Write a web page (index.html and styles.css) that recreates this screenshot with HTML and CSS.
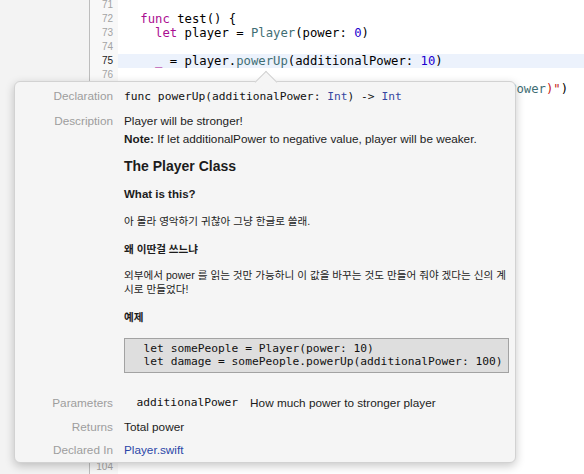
FILE: index.html
```html
<!DOCTYPE html>
<html>
<head>
<meta charset="utf-8">
<link rel="stylesheet" href="styles.css">
</head>
<body>
<div class="screen">
  <div class="sidebar"></div>
  <div class="editor">
    <div class="line"><div class="ln">71</div><div class="code"></div></div>
    <div class="line"><div class="ln">72</div><div class="code">  <span class="kw">func</span> test() {</div></div>
    <div class="line"><div class="ln">73</div><div class="code">    <span class="kw">let</span> player = <span class="ty">Player</span>(power: <span class="num">0</span>)</div></div>
    <div class="line"><div class="ln">74</div><div class="code"></div></div>
    <div class="line active"><div class="ln cur">75</div><div class="code">    <span class="kw">_</span> = player.<span class="ty">powerUp</span>(additionalPower: <span class="num">10</span>)</div></div>
    <div class="line"><div class="ln">76</div><div class="code"></div></div>
    <div class="line"><div class="ln"></div><div class="code">                                                    <span class="ty">Power</span><span class="str">)"</span>)</div></div>
    <div class="line"><div class="ln"></div><div class="code"></div></div>
    <div class="line"><div class="ln"></div><div class="code"></div></div>
    <div class="line"><div class="ln"></div><div class="code"></div></div>
    <div class="line"><div class="ln"></div><div class="code"></div></div>
    <div class="line"><div class="ln"></div><div class="code"></div></div>
    <div class="line"><div class="ln"></div><div class="code"></div></div>
    <div class="line"><div class="ln"></div><div class="code"></div></div>
    <div class="line"><div class="ln"></div><div class="code"></div></div>
    <div class="line"><div class="ln"></div><div class="code"></div></div>
    <div class="line"><div class="ln"></div><div class="code"></div></div>
    <div class="line"><div class="ln"></div><div class="code"></div></div>
    <div class="line"><div class="ln"></div><div class="code"></div></div>
    <div class="line"><div class="ln"></div><div class="code"></div></div>
    <div class="line"><div class="ln"></div><div class="code"></div></div>
    <div class="line"><div class="ln"></div><div class="code"></div></div>
    <div class="line"><div class="ln"></div><div class="code"></div></div>
    <div class="line"><div class="ln"></div><div class="code"></div></div>
    <div class="line"><div class="ln"></div><div class="code"></div></div>
    <div class="line"><div class="ln"></div><div class="code"></div></div>
    <div class="line"><div class="ln"></div><div class="code"></div></div>
    <div class="line"><div class="ln"></div><div class="code"></div></div>
    <div class="line"><div class="ln"></div><div class="code"></div></div>
    <div class="line"><div class="ln"></div><div class="code"></div></div>
    <div class="line"><div class="ln"></div><div class="code"></div></div>
    <div class="line"><div class="ln"></div><div class="code"></div></div>
    <div class="line"><div class="ln"></div><div class="code"></div></div>
    <div class="line"><div class="ln">104</div><div class="code"></div></div>
  </div>

  <div class="popup">
    <div class="doc">
      <div class="label">Declaration</div>
      <div class="val"><span class="mono">func powerUp(additionalPower: <span class="tlink">Int</span>) -&gt; <span class="tlink">Int</span></span></div>

      <div class="label">Description</div>
      <div class="val desc">
        <p>Player will be stronger!</p>
        <p class="note"><b>Note:</b> If let additionalPower to negative value, player will be weaker.</p>
        <h1 class="h1">The Player Class</h1>
        <h3 class="h3">What is this?</h3>
        <p class="ko">아 몰라 영악하기 귀찮아 그냥 한글로 쓸래.</p>
        <h3 class="h3 ko">왜 이딴걸 쓰느냐</h3>
        <p class="ko">외부에서 power 를 읽는 것만 가능하니 이 값을 바꾸는 것도 만들어 줘야 겠다는 신의 계<br>시로 만들었다!</p>
        <h3 class="h3 ko">예제</h3>
        <pre class="codeblock">  let somePeople = Player(power: 10)
  let damage = somePeople.powerUp(additionalPower: 100)</pre>
      </div>

      <div class="label">Parameters</div>
      <div class="val params"><span class="mono">additionalPower</span><span>How much power to stronger player</span></div>

      <div class="label">Returns</div>
      <div class="val">Total power</div>

      <div class="label">Declared In</div>
      <div class="val"><span class="link">Player.swift</span></div>
    </div>
  </div>
</div>
</body>
</html>
```

FILE: styles.css
```css
* { box-sizing: border-box; }
html, body { margin: 0; padding: 0; }
body {
  width: 584px;
  height: 474px;
  overflow: hidden;
  background: #ffffff;
  font-family: "Liberation Sans", Arial, sans-serif;
}
.screen {
  position: relative;
  display: flex;
  height: 474px;
  overflow: hidden;
}
.sidebar {
  width: 90px;
  flex: none;
  background: #f3f3f3;
  border-right: 1px solid #bdbdbd;
}
.editor {
  flex: 1;
  margin-top: -2px;
}
.line {
  display: flex;
  height: 14px;
  line-height: 14px;
}
.ln {
  width: 28px;
  flex: none;
  background: #f8f8f8;
  text-align: right;
  padding-right: 5px;
  font-size: 10px;
  color: #a3a3a3;
}
.ln.cur { color: #1a1a1a; }
.code {
  flex: 1;
  padding-left: 7.5px;
  font-family: "DejaVu Sans Mono", monospace;
  font-size: 12.25px;
  white-space: pre;
  color: #000;
}
.line.active .code { background: #ecf2fc; }
.kw { color: #aa0d91; }
.ty { color: #3f6e74; }
.num { color: #1c00cf; }
.str { color: #c41a16; }

.popup {
  position: absolute;
  left: 14px;
  top: 81px;
  width: 502px;
  background: #f5f5f5;
  border: 1px solid #d2d2d2;
  border-radius: 6px;
  box-shadow: 0 3px 10px rgba(0, 0, 0, 0.22);
  padding: 7px 7px 5px 0;
}
.popup::before {
  content: "";
  position: absolute;
  left: 242.5px;
  top: -8px;
  width: 15px;
  height: 15px;
  background: #f5f5f5;
  border-top: 1px solid #d2d2d2;
  border-left: 1px solid #d2d2d2;
  transform: rotate(45deg);
}
.doc {
  position: relative;
  display: grid;
  grid-template-columns: 98px 1fr;
  column-gap: 11px;
  row-gap: 9.5px;
}
.label {
  text-align: right;
  color: #9d9d9d;
  font-size: 11.75px;
  line-height: 14px;
}
.val {
  font-size: 11.75px;
  line-height: 14px;
  color: #1c1c1c;
}
.mono {
  font-family: "DejaVu Sans Mono", monospace;
  font-size: 11.25px;
  color: #111;
}
.tlink { color: #3646a0; }
.link { color: #2b47a8; }

.desc > * { margin: 0; }
.desc > * + * { margin-top: 13.5px; }
.desc > .note { margin-top: 4px; }
.desc > .h1 {
  margin-top: 11px;
  font-size: 14px;
  line-height: 18px;
  font-weight: bold;
}
.desc > .h1 + .h3 { margin-top: 12.5px; }
.h3 {
  font-size: 11.5px;
  line-height: 14px;
  font-weight: bold;
}
.ko {
  font-family: "Liberation Sans", "Noto Sans CJK KR", sans-serif;
  font-size: 10.6px;
  letter-spacing: 0;
}
p.ko { line-height: 13.5px; }
.desc > .codeblock {
  margin-top: 14px;
  margin-bottom: 14px;
  background: #dedede;
  border: 1px solid #a2a2a2;
  padding: 3.5px 5px;
  font-family: "DejaVu Sans Mono", monospace;
  font-size: 11.25px;
  line-height: 13px;
  color: #111;
}
.params {
  display: flex;
  gap: 12px;
  padding-left: 12.5px;
}
```
